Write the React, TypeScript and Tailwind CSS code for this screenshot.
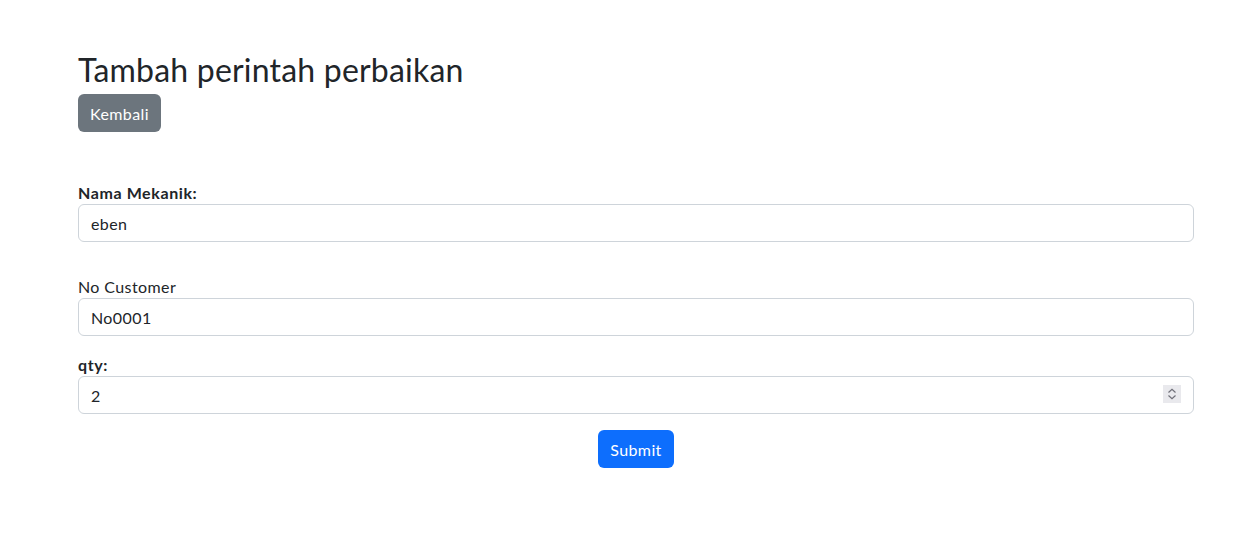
import React from 'react';

const font = { fontFamily: 'Lato, "Noto Sans", sans-serif' };

function Spinner() {
  return (
    <div className="absolute right-[13px] top-[9px] w-[18px] h-[18px] bg-[#e9e9ed] flex items-center justify-center">
      <svg width="12" height="14" viewBox="0 0 12 14" fill="none" stroke="#6f6f78" strokeWidth="1.2">
        <path d="M2.5 5.5 L6 2.2 L9.5 5.5" />
        <path d="M2.5 8.5 L6 11.8 L9.5 8.5" />
      </svg>
    </div>
  );
}

export default function App() {
  return (
    <div className="min-h-screen bg-white text-[#212529] text-[16px] leading-6 tracking-[0.4px]" style={font}>
      <div className="ml-[78px] w-[1116px] pt-[48px]">
        <h2 className="text-[32px] leading-[38px] font-normal pt-[3px] mb-[5px] tracking-[0.2px]">Tambah perintah perbaikan</h2>
        <button className="h-[38px] px-3 pt-px rounded-md bg-[#6c757d] text-white">Kembali</button>

        <form className="mt-12" onSubmit={(e) => e.preventDefault()}>
          <div>
            <label className="block font-bold tracking-[0.6px] pt-px -mb-px">Nama Mekanik:</label>
            <input
              type="text"
              defaultValue="eben"
              className="block w-full h-[38px] px-3 pt-px border border-[#ced4da] rounded-md outline-none"
            />
          </div>

          <div className="mt-8">
            <label className="block pt-px -mb-px">No Customer</label>
            <input
              type="text"
              defaultValue="No0001"
              className="block w-full h-[38px] px-3 pt-px border border-[#ced4da] rounded-md outline-none"
            />
          </div>

          <div className="mt-4">
            <label className="block font-bold tracking-[0.6px] pt-px -mb-px">qty:</label>
            <div className="relative">
              <input
                type="text"
                inputMode="numeric"
                defaultValue="2"
                className="block w-full h-[38px] px-3 pt-px border border-[#ced4da] rounded-md outline-none"
              />
              <Spinner />
            </div>
          </div>

          <div className="mt-4 flex justify-center">
            <button type="submit" className="h-[38px] px-3 pt-px rounded-md bg-[#0d6efd] text-white">Submit</button>
          </div>
        </form>
      </div>
    </div>
  );
}
